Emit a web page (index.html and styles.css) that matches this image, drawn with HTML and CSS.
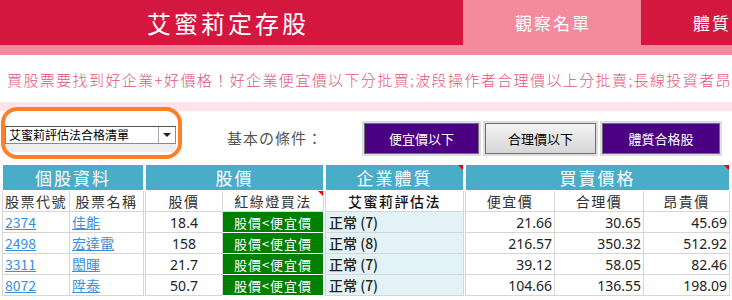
FILE: index.html
```html
<!DOCTYPE html>
<html>
<head>
    <title>艾蜜莉定存股</title>
    <link rel="stylesheet" href="styles.css">
</head>
<body>
    <div class="topbar">
        <div class="brand">艾蜜莉定存股</div>
        <div class="tab active">觀察名單</div>
        <div class="tab">體質</div>
    </div>
    <div class="strip"></div>

    <div class="marquee">買股票要找到好企業+好價格！好企業便宜價以下分批買;波段操作者合理價以上分批賣;長線投資者昂貴價以上分批賣</div>
    <div class="band"></div>

    <div class="toolbar">
        <div class="picker">
            <div class="select">
                <span class="select-text">艾蜜莉評估法合格清單</span>
                <span class="select-arrow"></span>
            </div>
            <div class="picker-foot"></div>
        </div>
        <div class="ring"></div>
        <div class="cond">基本の條件：</div>
        <button class="btn purple btn-cheap">便宜價以下</button>
        <button class="btn gray btn-fair">合理價以下</button>
        <button class="btn purple btn-good">體質合格股</button>
    </div>

    <div class="grid">
        <table class="group g1">
            <tr><th colspan="2" class="head">個股資料</th></tr>
            <tr><td class="sub w-code">股票代號</td><td class="sub">股票名稱</td></tr>
            <tr><td><a href="#">2374</a></td><td><a href="#">佳能</a></td></tr>
            <tr><td><a href="#">2498</a></td><td><a href="#">宏達電</a></td></tr>
            <tr><td><a href="#">3311</a></td><td><a href="#">閎暉</a></td></tr>
            <tr><td><a href="#">8072</a></td><td><a href="#">陞泰</a></td></tr>
        </table>
        <table class="group g2">
            <tr><th colspan="2" class="head">股價</th></tr>
            <tr><td class="sub w-price">股價</td><td class="sub mark">紅綠燈買法</td></tr>
            <tr><td class="num-c">18.4</td><td class="go">股價&lt;便宜價</td></tr>
            <tr><td class="num-c">158</td><td class="go">股價&lt;便宜價</td></tr>
            <tr><td class="num-c">21.7</td><td class="go">股價&lt;便宜價</td></tr>
            <tr><td class="num-c">50.7</td><td class="go">股價&lt;便宜價</td></tr>
        </table>
        <table class="group g3">
            <tr><th class="head mark">企業體質</th></tr>
            <tr><td class="sub bold">艾蜜莉評估法</td></tr>
            <tr><td class="health">正常 (7)</td></tr>
            <tr><td class="health">正常 (8)</td></tr>
            <tr><td class="health">正常 (7)</td></tr>
            <tr><td class="health">正常 (7)</td></tr>
        </table>
        <table class="group g4">
            <tr><th colspan="3" class="head mark">買賣價格</th></tr>
            <tr><td class="sub w-p">便宜價</td><td class="sub w-p">合理價</td><td class="sub">昂貴價</td></tr>
            <tr><td class="num">21.66</td><td class="num">30.65</td><td class="num">45.69</td></tr>
            <tr><td class="num">216.57</td><td class="num">350.32</td><td class="num">512.92</td></tr>
            <tr><td class="num">39.12</td><td class="num">58.05</td><td class="num">82.46</td></tr>
            <tr><td class="num">104.66</td><td class="num">136.55</td><td class="num">198.09</td></tr>
        </table>
    </div>
</body>
</html>
```

FILE: styles.css
```css
html, body {
    margin: 0;
    padding: 0;
}

body {
    width: 732px;
    overflow: hidden;
    background-color: #fff;
    color: #222;
    font-family: "Noto Sans", "Noto Sans CJK TC", sans-serif;
}

/* top navigation */
.topbar {
    display: flex;
    height: 45px;
    background-color: #d4173f;
    color: #fff;
}

.brand {
    width: 316px;
    padding-left: 147px;
    font-family: "Noto Sans CJK TC", sans-serif;
    font-size: 24px;
    letter-spacing: 3px;
    line-height: 45px;
}

.tab {
    font-family: "Noto Sans CJK TC", sans-serif;
    font-size: 17px;
    letter-spacing: 2px;
    line-height: 45px;
    padding-left: 52px;
    white-space: nowrap;
}

.tab.active {
    width: 126px;
    background-color: #f38a9e;
}

.strip {
    height: 10px;
    background-color: #f38a9e;
}

.marquee {
    height: 47px;
    padding-left: 7px;
    font-family: "Noto Sans CJK TC", sans-serif;
    font-size: 15px;
    font-weight: 300;
    letter-spacing: 1.4px;
    line-height: 50px;
    color: #e4557b;
    white-space: nowrap;
    overflow: hidden;
}

.band {
    height: 9px;
    background-color: #fde4ea;
}

/* filter bar */
.toolbar {
    position: relative;
    display: flex;
    align-items: flex-start;
    height: 53px;
}

.picker {
    margin: 15px 0 0 5px;
    width: 171px;
}

.select {
    display: flex;
    height: 16px;
    border: 1px solid #8a8a8a;
    border-top-color: #555;
    background-color: #fff;
}

.select-text {
    flex: 1;
    padding-left: 3px;
    font-family: "Noto Sans CJK TC", sans-serif;
    font-size: 12px;
    line-height: 16px;
    color: #000;
}

.select-arrow {
    width: 16px;
    border-left: 1px solid #aaa;
    position: relative;
}

.select-arrow::after {
    content: "";
    position: absolute;
    left: 4px;
    top: 6px;
    border-left: 4px solid transparent;
    border-right: 4px solid transparent;
    border-top: 4px solid #222;
}

.picker-foot {
    height: 8px;
    background-color: #eee;
}

.ring {
    position: absolute;
    left: 1px;
    top: -4px;
    width: 173px;
    height: 44px;
    border: 4px solid #ff7f27;
    border-radius: 16px;
}

.cond {
    margin: 16px 0 0 51px;
    width: 137px;
    font-family: "Noto Sans CJK TC", sans-serif;
    font-size: 15px;
    letter-spacing: 1px;
    color: #555;
}

.btn {
    margin-top: 12px;
    height: 31px;
    border: 1px solid #6e6e6e;
    box-shadow: 0 0 0 2px #dedede;
    font-family: "Noto Sans CJK TC", sans-serif;
    font-size: 13px;
    padding: 0;
    cursor: pointer;
}

.btn.purple {
    background-color: #4b0082;
    color: #fff;
}

.btn.gray {
    background: linear-gradient(#f4f4f4, #d6d6d6);
    color: #000;
}

.btn-cheap {
    width: 115px;
}

.btn-fair {
    width: 111px;
    margin-left: 6px;
}

.btn-good {
    width: 118px;
    margin-left: 6px;
}

/* data table */
.grid {
    display: flex;
    gap: 1px;
    padding-left: 2px;
}

.group {
    border-collapse: collapse;
    border: 1px solid #c8c8c8;
    font-size: 14px;
}

.g1 { width: 142px; }
.g2 { width: 179px; }
.g3 { width: 139px; }
.g4 { width: 265px; }

.group th,
.group td {
    border: 1px solid #d6d6d6;
    height: 20px;
    padding: 0 2px;
    white-space: nowrap;
}

.head {
    position: relative;
    height: 21px;
    background-color: #4aadc7;
    color: #fff;
    font-family: "Noto Sans CJK TC", sans-serif;
    font-size: 17px;
    font-weight: normal;
    letter-spacing: 2px;
    border-color: #fff !important;
}

.sub {
    position: relative;
    text-align: center;
    font-family: "Noto Sans CJK TC", sans-serif;
    letter-spacing: 1.5px;
    color: #333;
}

.sub.bold {
    color: #111;
    font-weight: 500;
}

.mark::after {
    content: "";
    position: absolute;
    top: 0;
    right: 0;
    border-top: 5px solid #e00;
    border-left: 5px solid transparent;
}

.w-code { width: 60px; }
.w-price { width: 72px; }
.w-p { width: 84px; }

.group a {
    color: #3b8ed8;
    font-family: "Noto Sans CJK TC", sans-serif;
}

.num-c {
    text-align: center;
}

.num {
    text-align: right;
}

.go {
    background-color: #008000;
    color: #fff;
    text-align: center;
    font-family: "Noto Sans CJK TC", sans-serif;
    font-size: 13px;
    letter-spacing: 1px;
    border-color: #fff !important;
}

.health {
    background-color: #e3f2f6;
    font-family: "Noto Sans CJK TC", sans-serif;
    font-weight: 500;
    padding-left: 3px !important;
}
```
